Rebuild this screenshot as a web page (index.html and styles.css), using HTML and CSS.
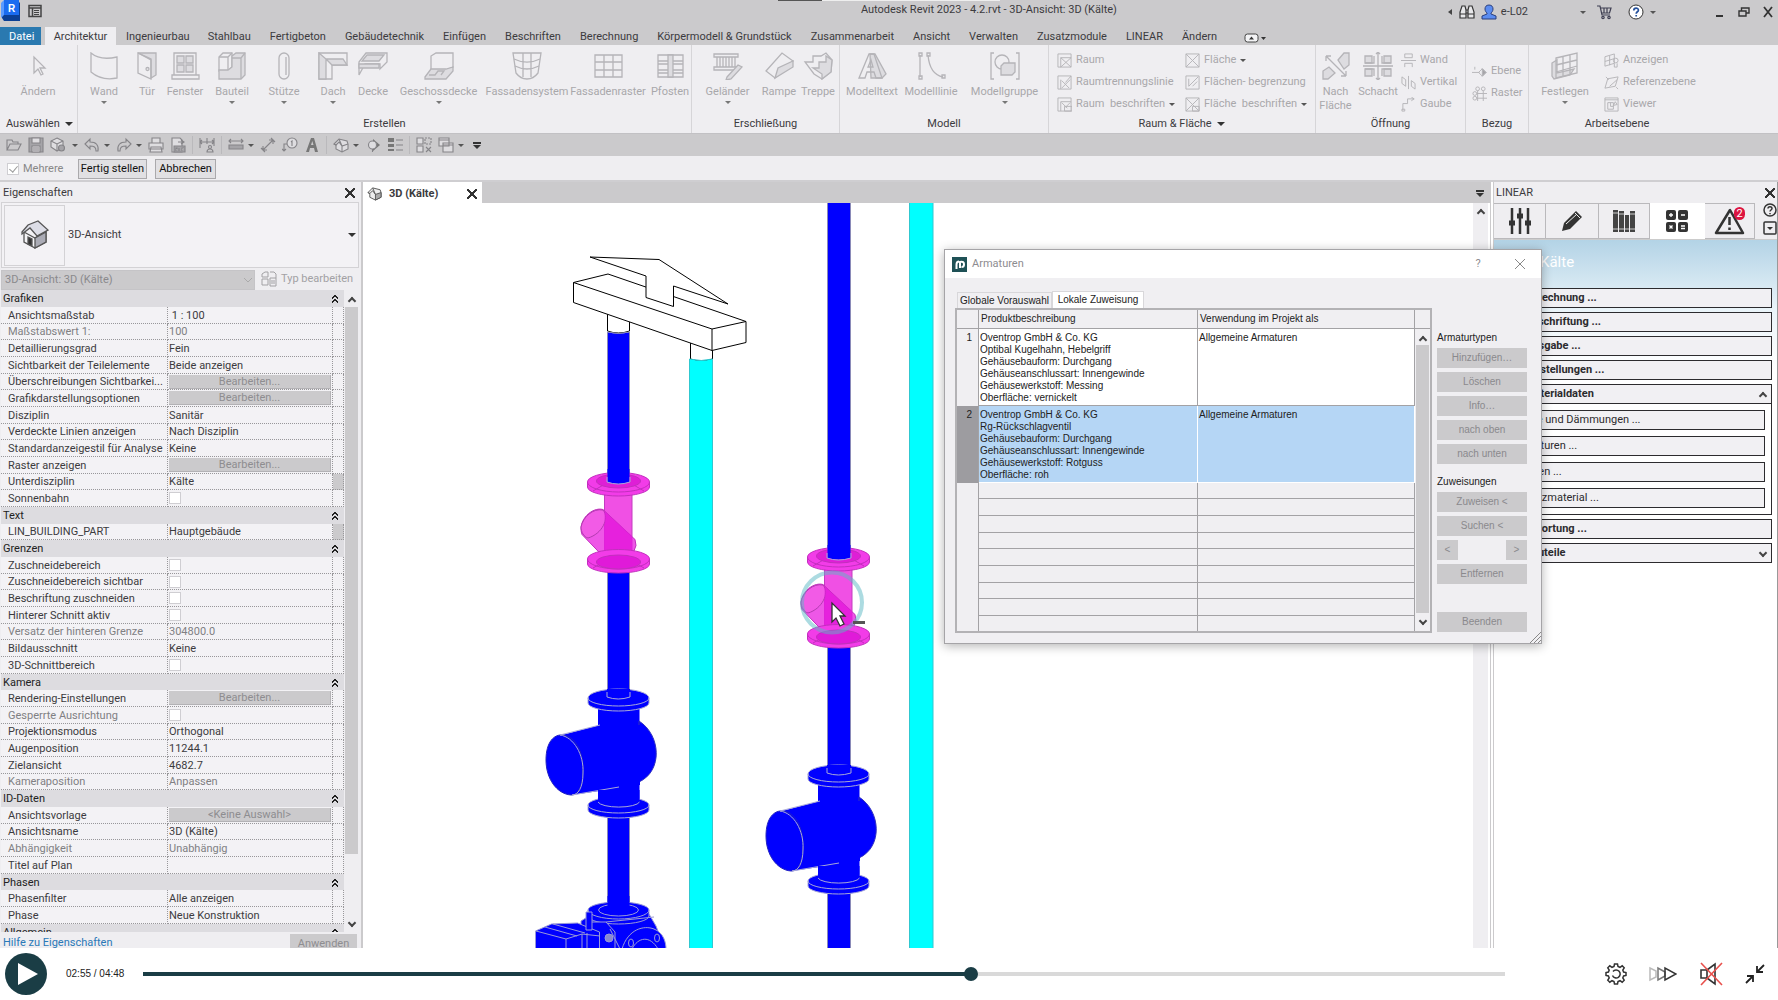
FILE: index.html
```
<!DOCTYPE html>
<html lang="de">
<head>
<meta charset="utf-8">
<title>Autodesk Revit 2023</title>
<link rel="stylesheet" href="styles.css">
</head>
<body>
<div class="app">
<header class="titlebar">
  <svg class="logo" width="20" height="22" viewBox="0 0 20 22"><path d="M2 1h15l2 2v18H3l-2-3z" fill="#0b3f94"/><path d="M3 0h15v15H3z" fill="#1b6cf0"/><path d="M3 0 0 3v15l3-3z" fill="#5a9bff"/><text x="7" y="12" class="logo-letter">R</text></svg>
  <svg class="appmenu" width="14" height="14" viewBox="0 0 14 14"><path d="M1 1.500h12v11H1zM1 4h12M4.500 4v8" fill="none" stroke="#444" stroke-width="1.500"/><path d="M6 6.500h5M6 8.500h5M6 10.500h5" stroke="#444"/></svg>
  <span class="doc-title">Autodesk Revit 2023 - 4.2.rvt - 3D-Ansicht: 3D (Kälte)</span>
  <div class="recorder"></div>
  <div class="account">
    <i class="caret left"></i>
    <svg width="16" height="16" viewBox="0 0 16 16" fill="#e8e8ea" stroke="#333" stroke-width="1.200"><path d="M3 2h3l1 4v8H1V8zM13 2h-3L9 6v8h6V8zM7 6h2v3H7zM1 10h6M9 10h6"/></svg>
    <svg width="16" height="16" viewBox="0 0 16 16" fill="#5b8cf0" stroke="#2b3f7c"><path d="M8 1c3 0 4 2 4 4s-1 3-2 4v1l5 2v3H1v-3l5-2V9C5 8 4 7 4 5s1-4 4-4z"/></svg>
    <span class="user">e-L02</span>
    <i class="caret"></i>
    <svg class="cart" width="16" height="16" viewBox="0 0 16 16" fill="none" stroke="#3f3f52" stroke-width="1.200"><path d="M1 2h3l2 9h8M4.500 4H15l-1.500 5H6M8 4v5M11 4v5"/><circle cx="7" cy="13.500" r="1.200"/><circle cx="13" cy="13.500" r="1.200"/></svg>
    <svg class="help" width="16" height="16" viewBox="0 0 16 16"><circle cx="8" cy="8" r="7" fill="#fff" stroke="#333"/><path d="M5.800 6.500c0-3 4.600-3 4.600-.3 0 1.600-2.200 1.600-2.200 3.500M8.200 11v1.600" fill="none" stroke="#24509c" stroke-width="1.700"/></svg>
    <i class="caret"></i>
  </div>
  <div class="winbtns">
    <button aria-label="Minimieren"><svg width="12" height="12" viewBox="0 0 12 12"><path d="M2 10h7" stroke="#333" stroke-width="2"/></svg></button>
    <button aria-label="Wiederherstellen"><svg width="12" height="12" viewBox="0 0 12 12" fill="none" stroke="#333" stroke-width="1.400"><path d="M1 5h7v5H1zM3.500 5V2H11v5H8"/></svg></button>
    <button aria-label="Schließen"><svg width="12" height="12" viewBox="0 0 12 12"><path d="m2 1 8 10M10 1 2 11" stroke="#333" stroke-width="1.800"/></svg></button>
  </div>
</header>

<nav class="tabs">
  <button class="file">Datei</button><button class="active">Architektur</button><button>Ingenieurbau</button><button>Stahlbau</button><button>Fertigbeton</button><button>Gebäudetechnik</button><button>Einfügen</button><button>Beschriften</button><button>Berechnung</button><button>Körpermodell &amp; Grundstück</button><button>Zusammenarbeit</button><button>Ansicht</button><button>Verwalten</button><button>Zusatzmodule</button><button>LINEAR</button><button>Ändern</button>
  <button class="collapse" aria-label="Menüband"><svg width="22" height="12" viewBox="0 0 22 12"><rect x="1" y="2" width="13" height="8" rx="2.500" fill="#f3f3f5" stroke="#444"/><path d="m5 7.500 2.500-3 2.500 3zM17 5h5l-2.500 3z" fill="#333"/></svg></button>
</nav>

<section class="ribbon">
  <div class="group g-select">
    <div class="tools">
      <button class="tool"><svg viewBox="0 0 32 28"><path d="M12 5v16l4-4 3 6 2-1-3-6h5z"/></svg>Ändern</button>
    </div>
    <h2>Auswählen <i class="caret wide"></i></h2>
  </div>
  <div class="group g-build">
    <div class="tools">
      <button class="tool"><svg viewBox="0 0 32 28"><path d="M3 1c7 6 17 6 26 4v21C19 28 10 26 3 20z"/></svg>Wand<i class="caret"></i></button>
      <button class="tool"><svg viewBox="0 0 32 28"><path class="f" d="M7 1h18v22l-5 3V8L7 1z"/><path d="M7 1v20l13 6V7z"/><circle cx="16.500" cy="17" r="1.500"/></svg>Tür</button>
      <button class="tool"><svg viewBox="0 0 32 28"><path d="M5 1h22v22H5zM3 23h27v4H3z"/><path class="f" d="M8 4h7v7H8zM17 4h7v7h-7zM8 13h7v7H8zM17 13h7v7h-7z"/></svg>Fenster</button>
      <button class="tool"><svg viewBox="0 0 32 28"><path d="M3 5l4-4h9v14l-4 4H3z"/><path class="f" d="M16 4l4-3h9v22l-4 4H3v-9h9l4-3z"/><path d="M3 5h9l4-4M12 5v13M16 6h9l4-5M25 6v21"/></svg>Bauteil<i class="caret"></i></button>
      <button class="tool"><svg viewBox="0 0 32 28"><rect x="11" y="1" width="10" height="26" rx="5"/><path d="M18 5v18"/></svg>Stütze<i class="caret"></i></button>
      <button class="tool"><svg viewBox="0 0 32 28"><path d="M2 1h28v12H15v14H2z"/><path class="f" d="M2 1l7 6v20H2zM9 7l6 6h15l-4-6z"/></svg>Dach<i class="caret"></i></button>
      <button class="tool"><svg viewBox="0 0 32 28"><path d="M2 10L9 1h21v9l-7 7v-5H8l-6 11z"/><path class="f" d="M10 3h17l-5 6H5zM2 12h20v4H2z"/></svg>Decke</button>
      <button class="tool"><svg viewBox="0 0 32 28"><path d="M8 4l5-3h17v14l-7 3H8z"/><path class="f" d="M2 25l6-8h15l7-2v4l-7 8H2z"/><path d="M6 23h6l3-4h6l-3 4"/></svg>Geschossdecke<i class="caret"></i></button>
      <button class="tool"><svg viewBox="0 0 32 28"><path d="M2 1h28l-3 20c-6 8-16 8-22 0z"/><path d="M3 7c8 4 18 4 26 0M4 14c8 4 16 4 24 0M12 1v24M20 1v24"/></svg>Fassadensystem</button>
      <button class="tool"><svg viewBox="0 0 32 28"><path d="M3 3h27v22H3zM3 10h27M3 18h27M12 3v22M21 3v22"/></svg>Fassadenraster</button>
      <button class="tool"><svg viewBox="0 0 32 28"><path d="M4 3h25v22H4zM4 9h25M4 12h25M4 18h25M4 21h25"/><path class="f" d="M14 3h5v22h-5z"/></svg>Pfosten</button>
    </div>
    <h2>Erstellen</h2>
  </div>
  <div class="group g-access">
    <div class="tools">
      <button class="tool"><svg viewBox="0 0 32 28"><path d="M2 2h24v3H2zM2 15h24v3H2zM5 5v10M8 5v10M11 5v10M14 5v10M17 5v10M20 5v10M23 5v10"/><path class="f" d="M15 25l11-12 4 2-11 12-5 1z"/></svg>Geländer<i class="caret"></i></button>
      <button class="tool"><svg viewBox="0 0 32 28"><path d="M3 19L19 1l11 8-18 17z"/><path class="f" d="M12 26l3-10L30 9v6z"/></svg>Rampe</button>
      <button class="tool"><svg viewBox="0 0 32 28"><path d="M3 10h8V4h8l5-3 6 7-1 12-9 7-8-5z"/><path class="f" d="M11 16h6v-6h7V4l6 4-1 12-9 7v-5z"/></svg>Treppe</button>
    </div>
    <h2>Erschließung</h2>
  </div>
  <div class="group g-model">
    <div class="tools">
      <button class="tool"><svg viewBox="0 0 32 28"><path class="f" d="M14 2h5l11 20-4 4H15z"/><path d="M3 26L13 2h5l8 24h-6l-2-6h-7l-2 6zM12 15h5l-2-7z"/></svg>Modelltext</button>
      <button class="tool"><svg viewBox="0 0 32 28"><path d="M5 3v22M13 3c1 12 5 20 15 22"/><path d="M4 1h3v3H4zM4 24h3v3H4zM12 1h3v3h-3zM27 23h3v3h-3z"/></svg>Modelllinie</button>
      <button class="tool"><svg viewBox="0 0 32 28"><path d="M5 1H2v26h3M27 1h3v26h-3"/><circle cx="13" cy="10" r="7"/><path class="f" d="M12 14l3-3h11v9l-3 3H12z"/></svg>Modellgruppe<i class="caret"></i></button>
    </div>
    <h2>Modell</h2>
  </div>
  <div class="group g-room">
    <div class="tools">
      <div class="stack">
        <button><svg viewBox="0 0 16 16"><path d="M1 1h14v14H1zM4 5v10M4 5h11M4 5l11 10M15 5L4 15"/></svg>Raum</button>
        <button><svg viewBox="0 0 16 16"><path d="M1 1h14v14H1zM4 15V5M5 14l9-9M5 6l8 8M9 8l6-7"/></svg>Raumtrennungslinie</button>
        <button><svg viewBox="0 0 16 16"><path d="M1 1h14v14H1zM4 5h11M4 5v10M5 6l6 6M14 6l-5 5M8 10h8v5H8z"/></svg>Raum&nbsp; beschriften <i class="caret"></i></button>
      </div>
      <div class="stack">
        <button><svg viewBox="0 0 16 16"><path d="M1 1h14v14H1zM1 1l14 14M15 1L1 15"/></svg>Fläche <i class="caret"></i></button>
        <button><svg viewBox="0 0 16 16"><path d="M1 1h14v14H1zM4 4v8M4 12L14 2M8 12l5-5"/></svg>Flächen- begrenzung</button>
        <button><svg viewBox="0 0 16 16"><path d="M1 1h14v14H1zM1 1l14 14M15 1L1 15M8 10h7v5H8z"/></svg>Fläche&nbsp; beschriften <i class="caret"></i></button>
      </div>
    </div>
    <h2>Raum &amp; Fläche <i class="caret wide"></i></h2>
  </div>
  <div class="group g-opening">
    <div class="tools">
      <button class="tool"><svg viewBox="0 0 32 28"><path d="M6 4l20 20M6 4v5M6 4h5M26 24v-5M26 24h-5"/><path class="f" d="M18 8l6-7h5v12l-5 4zM3 19l6-4 6 6-7 6H3z"/></svg>Nach<br>Fläche</button>
      <button class="tool"><svg viewBox="0 0 32 28"><path class="f" d="M3 4h7v7H3zM22 4h7v7h-7zM3 17h7v7H3zM22 17h7v7h-7z"/><path d="M12 4v7H3M20 4v7h9M12 24v-7H3M20 24v-7h9M16 0v28M1 14h30M14 2l2-2 2 2M14 26l2 2 2-2"/></svg>Schacht</button>
      <div class="stack">
        <button><svg viewBox="0 0 16 16"><path d="M4 1h8v4H4zM0 8h16M4 15v-4h8v4"/></svg>Wand</button>
        <button><svg viewBox="0 0 16 16"><path d="M1 2l4 3v7L1 9zM11 6l4 3v6l-4-3zM8 1v14"/></svg>Vertikal</button>
        <button><svg viewBox="0 0 16 16"><path d="M2 14V7h5V2h7M11 0l3 2-3 2M1 13h3v2H1z"/></svg>Gaube</button>
      </div>
    </div>
    <h2>Öffnung</h2>
  </div>
  <div class="group g-datum">
    <div class="tools">
      <div class="stack two">
        <button><svg viewBox="0 0 16 16"><path d="M0 9h8M3 3v3M11 5l4 4-4 4-4-4z"/><path class="d" d="M11 5v8l4-4z"/></svg>Ebene</button>
        <button><svg viewBox="0 0 16 16"><circle cx="6" cy="3" r="2"/><circle cx="12" cy="3" r="2"/><circle cx="3" cy="8" r="2"/><circle cx="3" cy="13" r="2"/><path d="M6 5v11M12 5v11M5 8h11M5 13h11"/></svg>Raster</button>
      </div>
    </div>
    <h2>Bezug</h2>
  </div>
  <div class="group g-plane">
    <div class="tools">
      <button class="tool"><svg viewBox="0 0 32 28"><path class="f" d="M3 11l5-3v13l17-4-4 6-16 4-2-3z"/><path d="M7 6l21-5v20L7 26zM7 13l21-5M7 20l21-6M14 4v20M21 3v20"/></svg>Festlegen<i class="caret"></i></button>
      <div class="stack">
        <button><svg viewBox="0 0 16 16"><path d="M1 4l10-3v10L1 14zM1 9l10-3M6 3v10"/><circle cx="12.500" cy="8" r="2.500"/><path d="M11 11v4h3v-4"/></svg>Anzeigen</button>
        <button><svg viewBox="0 0 16 16"><path d="M4 4l11-2-3 10-11 2zM2 2l3 3M13 13l2 2M6 12l8-7"/></svg>Referenzebene</button>
        <button><svg viewBox="0 0 16 16"><path d="M1 1h14v14H1zM1 3h14M4 6h6v7H4zM7 6v4h3M12 5l-2 4 4-1z"/></svg>Viewer</button>
      </div>
    </div>
    <h2>Arbeitsebene</h2>
  </div>
</section>

<div class="qat">
  <button aria-label="Öffnen"><svg viewBox="0 0 16 16"><path d="M1 13V3h5l1 2h5v2M1 13l3-6h11l-3 6z"/></svg></button>
  <button aria-label="Speichern"><svg viewBox="0 0 16 16"><path class="g" d="M1 1h14v14H1z"/><path class="w" d="M4 1h8v5H4zM4 9h8v6H4z"/><path d="M5 11h6M5 13h6"/></svg></button>
  <button aria-label="Synchronisieren" class="roomy"><svg viewBox="0 0 16 16"><path class="w" d="M7 1l6 3v6l-6 4-6-4V4z"/><path d="M1 4l6 3 6-3M7 7v7"/><circle class="g" cx="11.500" cy="11" r="3"/></svg><i class="caret"></i></button>
  <button aria-label="Rückgängig"><svg viewBox="0 0 16 16"><path d="M1 7l5-5v3c6 0 9 3 8 9h-2c0-4-2-5-6-5v3z"/></svg><i class="caret"></i></button>
  <button aria-label="Wiederholen"><svg viewBox="0 0 16 16"><path d="M15 7l-5-5v3C4 5 1 8 2 14h2c0-4 2-5 6-5v3z"/></svg><i class="caret"></i></button>
  <button aria-label="Drucken"><svg viewBox="0 0 16 16"><path class="w" d="M4 6V1h8v5M1 6h14v6H1zM3 10h10l1 5H2z"/></svg></button>
  <button aria-label="PDF" class="sep"><svg viewBox="0 0 16 16"><path class="w" d="M2 1h8l2 2v12H2z"/><path d="M8 5h5M11 3l3 2-3 2"/><path class="g" d="M4 9h11v6H4z"/><path class="w" d="M6 14v-3h1v1M9 14v-3M12 14v-3h2"/></svg></button>
  <button aria-label="Bemaßung" class="sep"><svg viewBox="0 0 16 16"><path d="M1 1v10M15 1v8M1 5h14M3 3L1 5l2 2M13 3l2 2-2 2M8 1v6"/><circle cx="11" cy="10" r="1.500"/><path d="M8 15c0-4 6-4 6 0z"/></svg></button>
  <button aria-label="Messen"><svg viewBox="0 0 16 16"><path d="M1 4h14M3 2L1 4l2 2M13 2l2 2-2 2"/><path class="g" d="M1 8h14v4H1z"/></svg><i class="caret"></i></button>
  <button aria-label="Ausgerichtete Bemaßung"><svg viewBox="0 0 16 16"><path d="M3 13L13 3M9 3h4v4M3 9v4h4M1 11l4 4M11 1l4 4"/></svg></button>
  <button aria-label="Element beschriften"><svg viewBox="0 0 16 16"><circle class="w" cx="10" cy="6" r="5"/><path d="M9 5l1-1v5M5 7H2v6M0 12l2 2 2-2"/></svg></button>
  <button aria-label="Text" class="sep"><svg viewBox="0 0 16 16"><path class="s" d="M2 15L7 1h3l4 14h-3l-1-4H6l-1 4zM7 8h2.500L8.300 4z"/></svg></button>
  <button aria-label="3D"><svg viewBox="0 0 16 16"><path class="w" d="M1 7l5-5 8 2 1 3v5l-6 3-6-3V8z"/><path d="M1 7l2 1 3-3 3 4 6-2M9 9v6M6 2l3 7"/></svg><i class="caret"></i></button>
  <button aria-label="Schnitt"><svg viewBox="0 0 16 16"><path class="s" d="M8 2l7 6-7 6z"/><circle class="w" cx="7.500" cy="8" r="4"/><path d="M7.500 12v3"/></svg></button>
  <button aria-label="Dünne Linien" class="sep"><svg viewBox="0 0 16 16"><path class="s" d="M1 1h6v4H1zM1 7h6v3H1zM1 12h6v2H1z"/><path d="M9 3h7M9 8h7M9 13h7"/></svg></button>
  <button aria-label="Fenster schließen"><svg viewBox="0 0 16 16"><path class="w" d="M1 1h6v6H1zM1 9h6v6H1z"/><path d="M9 1h6v6H9z" stroke-dasharray="2 1"/><path d="M10 10l5 5M15 10l-5 5"/></svg></button>
  <button aria-label="Fenster wechseln"><svg viewBox="0 0 16 16"><path class="w" d="M1 1h10v8H1zM5 6h10v9H5z"/><path d="M1 3h10M5 8h10"/></svg><i class="caret"></i></button>
  <button aria-label="Anpassen"><i class="caret wide lined"></i></button>
</div>

<div class="options">
  <label><input type="checkbox" class="box" checked disabled> Mehrere</label>
  <button>Fertig stellen</button>
  <button>Abbrechen</button>
</div>

<main class="work">
  <aside class="props">
    <div class="panel-head"><span>Eigenschaften</span><button class="x" aria-label="Schließen"></button></div>
    <button class="typebox">
      <span class="thumb"><svg width="30" height="30" viewBox="0 0 30 30" stroke="#555" stroke-width="1.300"><path d="M4 12v10l11 6 11-6V12L15 18z" fill="#f4f4f6"/><path d="M15 18v10l11-6V12z" fill="#aaabb5"/><path d="M2 12L8 5l10-4 10 9-11 6-7-8-8 6z" fill="#dcdde6"/><path d="M8 17l4 2v7l-4-2z" fill="#333"/></svg></span>
      <span>3D-Ansicht</span><i class="caret wide"></i>
    </button>
    <div class="typerow">
      <select aria-label="Ansicht" disabled><option>3D-Ansicht: 3D (Kälte)</option></select>
      <button disabled><svg width="16" height="16" viewBox="0 0 16 16" fill="none" stroke="#a2a1a4"><path d="M1 3l3-2h3v5H1zM9 1h4l2 2v4M1 8v6h6V8zM9 7h6v8H9zM10 10h4M10 12h4"/></svg>Typ bearbeiten</button>
    </div>
    <div class="listwrap">
      <div class="list">
      <table>
        <colgroup><col class="c1"><col class="c2"><col class="c3"></colgroup>
        <tbody>
        <tr class="cat"><th colspan="3">Grafiken<b></b></th></tr>
        <tr><td>Ansichtsmaßstab</td><td>&nbsp;1 : 100</td><td></td></tr>
        <tr class="off"><td>Maßstabswert 1:</td><td>100</td><td></td></tr>
        <tr><td>Detaillierungsgrad</td><td>Fein</td><td></td></tr>
        <tr><td>Sichtbarkeit der Teilelemente</td><td>Beide anzeigen</td><td></td></tr>
        <tr><td>Überschreibungen Sichtbarkei...</td><td><button disabled>Bearbeiten...</button></td><td></td></tr>
        <tr><td>Grafikdarstellungsoptionen</td><td><button disabled>Bearbeiten...</button></td><td></td></tr>
        <tr><td>Disziplin</td><td>Sanitär</td><td></td></tr>
        <tr><td>Verdeckte Linien anzeigen</td><td>Nach Disziplin</td><td></td></tr>
        <tr><td>Standardanzeigestil für Analyse</td><td>Keine</td><td></td></tr>
        <tr><td>Raster anzeigen</td><td><button disabled>Bearbeiten...</button></td><td></td></tr>
        <tr><td>Unterdisziplin</td><td>Kälte</td><td class="more"></td></tr>
        <tr><td><label for="p1">Sonnenbahn</label></td><td><input id="p1" type="checkbox" class="box"></td><td></td></tr>
        <tr class="cat"><th colspan="3">Text<b></b></th></tr>
        <tr><td>LIN_BUILDING_PART</td><td>Hauptgebäude</td><td class="more"></td></tr>
        <tr class="cat"><th colspan="3">Grenzen<b></b></th></tr>
        <tr><td><label for="p2">Zuschneidebereich</label></td><td><input id="p2" type="checkbox" class="box"></td><td></td></tr>
        <tr><td><label for="p3">Zuschneidebereich sichtbar</label></td><td><input id="p3" type="checkbox" class="box"></td><td></td></tr>
        <tr><td><label for="p4">Beschriftung zuschneiden</label></td><td><input id="p4" type="checkbox" class="box"></td><td></td></tr>
        <tr><td><label for="p5">Hinterer Schnitt aktiv</label></td><td><input id="p5" type="checkbox" class="box"></td><td></td></tr>
        <tr class="off"><td>Versatz der hinteren Grenze</td><td>304800.0</td><td></td></tr>
        <tr><td>Bildausschnitt</td><td>Keine</td><td></td></tr>
        <tr><td><label for="p6">3D-Schnittbereich</label></td><td><input id="p6" type="checkbox" class="box"></td><td></td></tr>
        <tr class="cat"><th colspan="3">Kamera<b></b></th></tr>
        <tr><td>Rendering-Einstellungen</td><td><button disabled>Bearbeiten...</button></td><td></td></tr>
        <tr class="off"><td><label for="p7">Gesperrte Ausrichtung</label></td><td><input id="p7" type="checkbox" class="box" disabled></td><td></td></tr>
        <tr><td>Projektionsmodus</td><td>Orthogonal</td><td></td></tr>
        <tr><td>Augenposition</td><td>11244.1</td><td></td></tr>
        <tr><td>Zielansicht</td><td>4682.7</td><td></td></tr>
        <tr class="off"><td>Kameraposition</td><td>Anpassen</td><td></td></tr>
        <tr class="cat"><th colspan="3">ID-Daten<b></b></th></tr>
        <tr><td>Ansichtsvorlage</td><td><button disabled>&lt;Keine Auswahl&gt;</button></td><td></td></tr>
        <tr><td>Ansichtsname</td><td>3D (Kälte)</td><td></td></tr>
        <tr class="off"><td>Abhängigkeit</td><td>Unabhängig</td><td></td></tr>
        <tr><td>Titel auf Plan</td><td></td><td></td></tr>
        <tr class="cat"><th colspan="3">Phasen<b></b></th></tr>
        <tr><td>Phasenfilter</td><td>Alle anzeigen</td><td></td></tr>
        <tr><td>Phase</td><td>Neue Konstruktion</td><td></td></tr>
        <tr class="cat"><th colspan="3">Allgemein<b></b></th></tr>
        </tbody>
      </table>
      </div>
      <div class="scroll"><i class="chev up"></i><div class="thumbbar"></div><i class="chev"></i></div>
    </div>
    <div class="props-foot"><a href="#hilfe">Hilfe zu Eigenschaften</a><button disabled>Anwenden</button></div>
  </aside>

  <section class="view">
    <div class="viewtabs">
      <div class="viewtab"><svg width="15" height="15" viewBox="0 0 16 16" stroke="#555"><path d="M1 7l5-5 8 2 1 3v5l-6 3-6-3V8z" fill="#eee"/><path d="M9 9l6-2v5l-6 3z" fill="#aaa"/><path d="M1 7l2 1 3-3 3 4M6 2l3 7" fill="none"/></svg><span>3D (Kälte)</span><button class="x" aria-label="Schließen"></button></div>
      <i class="caret wide lined"></i>
    </div>
    <div class="canvas">
      <svg class="scene" viewBox="363 202 1110 746" preserveAspectRatio="xMinYMin slice">
        <defs>
          <g id="check">
            <path d="M604.500 488h27.500v70h-27.500z" fill="#f050e4" stroke="#c43cc0"/>
            <path d="M603 509.500l32 30 1 6-3 8-6 8h-19l-26-27c-5-14 10-28 21-25z" fill="#e81fdf" fill-opacity=".75" stroke="#c22fbe"/>
            <path d="M581 527c2-10 12-19 22-17 7 8-1 24-15 28-4-1-7-6-7-11z" fill="#f25be6" stroke="#b23bb0"/>
            <path d="M604.500 512v46h27.500v-22l-27.500-25z" fill="#e31bdc" fill-opacity=".65"/>
            <g fill="#f23ce8" stroke="#c22fbe"><path d="M587.500 482a31 9.500 0 0 1 62 0v5a31 9 0 0 1-62 0z"/><path d="M587.500 482a31 10 0 0 0 62 0M593 491l12-7M644 491l-12-7" fill="none"/><ellipse cx="618.500" cy="481" rx="22" ry="7" fill="#de1fd6"/>
            <path d="M587.500 559a31 9.500 0 0 1 62 0v5a31 9 0 0 1-62 0z"/><path d="M587.500 559a31 10 0 0 0 62 0M593 568l12-7M644 568l-12-7" fill="none"/><ellipse cx="618.500" cy="562" rx="22" ry="7" fill="#e01ad9"/></g>
          </g>
          <g id="globe" fill="#00f" stroke="#a8a8d8" stroke-width="1">
            <path d="M598 708h41.500v94H598z" stroke="none"/>
            <path d="M639 721c22 14 24 50 0 61z" stroke="#3030c0"/>
            <path d="M562 735l38-10h40v60l-68 10z" stroke="none"/>
            <path d="M546 760c0-18 8-26 17-25 14 2 21 20 20 38-1 16-6 22-12 22-14-1-25-16-25-35z" stroke="#2020c0"/>
            <path d="M560 735c14 2 24 20 23 38 0 15-5 22-11 22l47-8M560 735l40-10" fill="none"/>
            <path d="M588 805a30.500 8 0 0 1 61 0v5a30.500 8 0 0 1-61 0z"/><path d="M588 805a30.500 8 0 0 0 61 0" fill="none"/><path d="M598 790h41.500v13a21 5 0 0 1-41.500 0z" stroke="none"/><path d="M598 802a21 6 0 0 0 41.500 0" fill="none"/>
            <path d="M588 698a30.500 9 0 0 1 61 0v5a30.500 8 0 0 1-61 0z"/><path d="M588 698a30.500 8 0 0 0 61 0" fill="none"/>
          </g>
        </defs>
        <g fill="#fff" stroke="#000">
          <path d="M607.500 310v20q11 4 22 0v-20zM690.500 338v20q11 4 22 0v-20z"/>
          <path d="M573.500 281.500l34.500-8.500 138 47.500v21l-34 8-138.500-48z"/>
          <path d="M573.500 281.500L712 328v21.500M712 328l34-7.500" fill="none"/>
          <path d="M590 256l69 2.500L728 303l-54.500-18v20.500l-27.500-9V275z"/>
        </g>
        <g fill="#00f" stroke="#8a8ab8">
          <path d="M607.500 331q11 3 22 0v620h-22z"/>
          <path d="M827.500 200h23v750h-23z"/>
        </g>
        <path d="M689.500 358q12 3 23 0v592h-23zM909.500 200h23.500v750h-23.500z" fill="#0ff" stroke="#30c8d0"/>
        <use href="#check" y="-1"/><path d="M607.500 468v13q11 4 22 0v-13z" fill="#00f"/><path d="M607 476v5q11 4 23 0v-5" fill="none" stroke="#a8a8d8"/>
        <use href="#check" x="220" y="74"/><path d="M827.500 544v13q11 3 23 0v-13z" fill="#00f"/><path d="M827 552v5q11 4 24 0v-5" fill="none" stroke="#a8a8d8"/>
        <use href="#globe" y="-1"/><path d="M607 688v8q11 4 23 0v-8z" fill="#00f"/><path d="M607 691v5q11 4 23 0v-5" fill="none" stroke="#a8a8d8"/>
        <use href="#globe" x="220" y="75"/><path d="M827 764v8q11 4 24 0v-8z" fill="#00f"/><path d="M827 767v5q11 4 24 0v-5" fill="none" stroke="#a8a8d8"/>
        <g fill="#00f" stroke="#9a9ad8">
          <path d="M581 948v-28l8-5 60-2 7 12 9 23z"/>
          <path d="M588 909a30.500 8 0 0 1 61 0v6a30.500 8 0 0 1-61 0z"/><ellipse cx="618.500" cy="909" rx="20" ry="6"/><path d="M588 909a30.500 9 0 0 0 61 0" fill="none"/>
          <path d="M607.500 895v12q11 4 22 0v-12" stroke="none"/>
          <path d="M590 921h16l9 10v17M606 921l48-5M610 928l10 20M622 948c6-20 22-24 32-20s12 14 12 20z"/><path d="M632 948c6-12 18-14 26 0" fill="none"/>
          <circle cx="609" cy="937" r="4" fill="#8888d0"/><ellipse cx="631" cy="942" rx="2.500" ry="4"/><ellipse cx="657" cy="937" rx="2.500" ry="4"/>
          <path d="M535.500 948v-18l16-7 26-1 22 9v17z"/><path d="M536 930l30 8v10M566 938l16-5 18 2M545 926l32 9M553 923l32 9M582 933v15M587 932v16" fill="none"/>
          <path d="M586 911h6v18h-6z"/>
        </g>
        <circle cx="832" cy="601.500" r="30" fill="none" stroke="#5ab8c4" stroke-opacity=".5" stroke-width="4"/>
        <path d="M853 620h12v3h-12z" fill="#555"/>
        <path d="M832 602v19l4-4 4 8 4-2-4-8h5z" fill="#fff" stroke="#333" stroke-width="1.300"/>
      </svg>
      <div class="scroll"><i class="chev up"></i></div>
    </div>
  </section>

  <aside class="linear">
    <div class="panel-head"><span>LINEAR</span><button class="x" aria-label="Schließen"></button></div>
    <div class="ltabs">
      <button aria-label="Einstellungen"><svg width="24" height="28" viewBox="0 0 24 28" stroke="#333" stroke-width="3"><path d="M4 1v26M12 1v26M20 1v26" stroke-width="2.500"/><path d="M1 16h6M9 9h6M17 16h6" stroke-width="5"/></svg></button>
      <button aria-label="Zeichnen"><svg width="24" height="24" viewBox="0 0 24 24"><path d="M2 22l2-8L16 2l6 6L10 20z" fill="#333"/><path d="M6 15L17 5M15 4l5 5" stroke="#eee" fill="none"/></svg></button>
      <button aria-label="Bibliothek"><svg width="24" height="24" viewBox="0 0 24 24" fill="#444"><path d="M1 1h5v22H1zM7 2h5v21H7zM13 6h4v17h-4zM18 2h5v21h-5z"/><path d="M1 4h5M1 20h5M7 5h5M7 20h5M13 20h4M18 5h5M18 20h5" stroke="#ccc"/></svg></button>
      <button class="active" aria-label="Berechnung"><svg width="24" height="24" viewBox="0 0 24 24" fill="#333"><rect x="1" y="1" width="10" height="10" rx="2"/><rect x="13" y="1" width="10" height="10" rx="2"/><rect x="1" y="13" width="10" height="10" rx="2"/><rect x="13" y="13" width="10" height="10" rx="2"/><path d="M4 6h4M6 4v4M16 6h4M4.500 16.500l3 3M7.500 16.500l-3 3M16 17h4M16 19.500h4" stroke="#fff" stroke-width="1.300"/></svg></button>
      <button aria-label="Warnungen"><svg width="34" height="30" viewBox="0 0 34 30"><path d="M17 4L3 27h27z" fill="none" stroke="#333" stroke-width="2.500" stroke-linejoin="round"/><path d="M16.500 11v8M16.500 21.500v2.500" stroke="#333" stroke-width="2.500"/></svg><span class="badge">2</span></button>
      <div class="lside"><button aria-label="Hilfe"><svg width="14" height="14" viewBox="0 0 14 14" fill="none" stroke="#333" stroke-width="1.500"><circle cx="7" cy="7" r="6"/><path d="M5 5.500c0-2.500 4-2.500 4 0C9 7 7 7 7 8.500M7 10v1.200"/></svg></button><button aria-label="Menü"><svg width="14" height="14" viewBox="0 0 14 14"><rect x="1" y="1" width="12" height="12" rx="1" fill="none" stroke="#333" stroke-width="1.500"/><path d="M4 6h6l-3 3z" fill="#333"/></svg></button></div>
    </div>
    <div class="lbody">
      <div class="lhead"><svg width="30" height="30" viewBox="0 0 30 30" stroke="#fff" stroke-width="2"><path d="M15 2v26M2 15h26M6 6l18 18M24 6L6 24M10 3l10 24M20 3L10 27"/></svg><span>Kälte</span></div>
      <button>Berechnung ...</button>
      <button>Beschriftung ...</button>
      <button>Ausgabe ...</button>
      <button>Einstellungen ...</button>
      <div class="fold">
        <button class="split"><span>Materialdaten</span><i class="chev up"></i></button>
        <button class="sub">Rohre und Dämmungen ...</button>
        <button class="sub">Armaturen ...</button>
        <button class="sub">Medien ...</button>
        <button class="sub">Zusatzmaterial ...</button>
      </div>
      <button>Verortung ...</button>
      <button class="split"><span>Bauteile</span><i class="chev"></i></button>
    </div>
  </aside>

  <div class="dialog" role="dialog" aria-label="Armaturen">
    <div class="dhead"><svg width="15" height="15" viewBox="0 0 15 15"><path d="M0 0h15v15H0z" fill="#1f5156"/><path d="M4.500 12V7.500c0-2 1-3 2.500-3M8 11V5c3-1 4 .5 4 2.500S11 10 9.500 10" fill="none" stroke="#fff" stroke-width="2"/></svg><span>Armaturen</span><button aria-label="Hilfe">?</button><button aria-label="Schließen"><svg width="12" height="12" viewBox="0 0 12 12"><path d="M1 1l10 10M11 1L1 11" stroke="#888"/></svg></button></div>
    <div class="dbody">
      <div class="dleft">
        <div class="dtabs"><button>Globale Vorauswahl</button><button class="active">Lokale Zuweisung</button></div>
        <div class="dgrid">
          <table>
            <colgroup><col class="n"><col class="p"><col class="v"></colgroup>
            <thead><tr><th></th><th>Produktbeschreibung</th><th>Verwendung im Projekt als</th></tr></thead>
            <tbody>
              <tr class="item"><th>1</th><td>Oventrop GmbH &amp; Co. KG<br>Optibal Kugelhahn, Hebelgriff<br>Gehäusebauform: Durchgang<br>Gehäuseanschlussart: Innengewinde<br>Gehäusewerkstoff: Messing<br>Oberfläche: vernickelt</td><td>Allgemeine Armaturen</td></tr>
              <tr class="item sel"><th>2</th><td>Oventrop GmbH &amp; Co. KG<br>Rg-Rückschlagventil<br>Gehäusebauform: Durchgang<br>Gehäuseanschlussart: Innengewinde<br>Gehäusewerkstoff: Rotguss<br>Oberfläche: roh</td><td>Allgemeine Armaturen</td></tr>
              <tr><th></th><td></td><td></td></tr><tr><th></th><td></td><td></td></tr><tr><th></th><td></td><td></td></tr><tr><th></th><td></td><td></td></tr><tr><th></th><td></td><td></td></tr><tr><th></th><td></td><td></td></tr><tr><th></th><td></td><td></td></tr><tr><th></th><td></td><td></td></tr><tr><th></th><td></td><td></td></tr>
            </tbody>
          </table>
          <div class="scroll"><i class="chev up"></i><div class="thumbbar"></div><i class="chev"></i></div>
        </div>
      </div>
      <div class="dside">
        <span>Armaturtypen</span>
        <button disabled>Hinzufügen…</button><button disabled>Löschen</button><button disabled>Info…</button><button disabled>nach oben</button><button disabled>nach unten</button>
        <span class="second">Zuweisungen</span>
        <button disabled>Zuweisen &lt;</button><button disabled>Suchen &lt;</button>
        <div class="pair"><button disabled>&lt;</button><button disabled>&gt;</button></div>
        <button disabled>Entfernen</button>
        <button disabled class="end">Beenden</button>
      </div>
    </div>
    <svg class="grip" width="11" height="11" viewBox="0 0 11 11"><path d="M0 11L11 0M4 11l7-7M8 11l3-3" stroke="#888"/></svg>
  </div>
</main>

<footer class="player">
  <button class="play" aria-label="Wiedergabe"><svg width="42" height="42" viewBox="0 0 42 42"><circle cx="21" cy="21" r="21" fill="#1a3d45"/><path d="M13 10l20 11-20 11z" fill="#fff"/></svg></button>
  <span class="time">02:55 / 04:48</span>
  <input type="range" aria-label="Position" min="0" max="2880" value="1755">
  <div class="controls">
  <button aria-label="Einstellungen"><svg width="22" height="22" viewBox="0 0 22 22" fill="none" stroke="#333" stroke-width="1.500"><path d="M9.500 1h3l.5 2.500 2 .8 2.200-1.500 2 2L17.800 7l.8 2 2.400.5v3l-2.400.5-.8 2 1.400 2.200-2 2-2.200-1.500-2 .8-.5 2.500h-3L9 18.500l-2-.8-2.200 1.500-2-2L4.200 15l-.8-2L1 12.500v-3L3.400 9l.8-2-1.400-2.200 2-2L7 4.300l2-.8z"/><path d="M8 8.500a4 4 0 1 1-.5 4"/></svg></button>
  <button aria-label="Geschwindigkeit"><svg width="28" height="16" viewBox="0 0 28 16" fill="none" stroke-width="1.500"><path d="M1 2v12l6-3V5z" stroke="#bbb"/><path d="M9 2v12l7-4V6z" stroke="#777"/><path d="M16 2v12l11-6z" stroke="#333"/></svg></button>
  <button aria-label="Ton aus"><svg width="24" height="24" viewBox="0 0 24 24" fill="none"><path d="M8 8H2v8h6zM8 8l8-6v20l-8-6" stroke="#333" stroke-width="1.600"/><path d="M2 1l21 22M23 1L2 23" stroke="#e8504c" stroke-width="1.600"/></svg></button>
  <button aria-label="Vollbild beenden"><svg width="20" height="20" viewBox="0 0 20 20" fill="none" stroke="#222" stroke-width="1.800"><path d="M19 1l-7 7M12 2v6h6M1 19l7-7M2 12h6v6"/></svg></button>
  </div>
</footer>
</div>
</body>
</html>
```
FILE: styles.css
```
* { box-sizing: border-box; }
body { margin: 0; background: #fff; color: #3c3b3e; font: 11px/16px Roboto, "Open Sans", sans-serif; }
button, select, input { font: inherit; color: inherit; margin: 0; }
button { border: 0; padding: 0; background: none; }
svg { display: block; flex: none; }
.app { display: flex; flex-direction: column; height: 100vh; overflow: hidden; }

/* small arrows */
.caret { display: inline-block; flex: none; border: 3px solid transparent; border-top-color: #555; border-bottom: 0; vertical-align: middle; }
.caret.left { border: 3px solid transparent; border-right: 4px solid #444; border-left: 0; }
.caret.wide { border-width: 4px 4px 0; border-top-color: #333; }
.caret.lined { position: relative; }
.caret.lined::before { content: ""; position: absolute; left: -4px; top: -7px; width: 8px; height: 2px; background: #333; }
.chev { width: 6px; height: 6px; border: solid #444; border-width: 0 2px 2px 0; transform: rotate(45deg); flex: none; }
.chev.up { transform: rotate(225deg); }
.x { width: 10px; height: 10px; background: linear-gradient(45deg, transparent 44%, #333 44%, #333 56%, transparent 56%), linear-gradient(-45deg, transparent 44%, #333 44%, #333 56%, transparent 56%); }
.box { appearance: none; position: relative; width: 12px; height: 12px; background: #fff; border: 1px solid #cfced2; display: block; }
.box:checked::after { content: ""; position: absolute; left: 3px; top: 0; width: 4px; height: 7px; border: solid #999; border-width: 0 1px 1px 0; transform: rotate(40deg); }

/* title bar */
.titlebar { position: relative; flex: none; height: 27px; background: #cbcacc; display: flex; align-items: center; padding: 0 4px 5px 1px; }
.logo-letter { font: bold 10px "Liberation Sans", sans-serif; fill: #fff; }
.logo { align-self: flex-start; }
.appmenu { margin-left: 7px; }
.doc-title { flex: 1; padding: 0 0 3px 488px; text-align: center; }
.recorder { position: absolute; left: 778px; top: 0; width: 222px; height: 1px; background: linear-gradient(90deg, #555 44px, #eee 44px); }
.account { display: flex; align-items: center; padding-top: 2px; }
.account svg { margin-left: 6px; }
.account .left + svg { margin-left: 7px; }
.user { margin: 0 52px 0 4px; }
.account .cart { margin-left: 10px; }
.account .help { margin-left: 16px; margin-right: 6px; }
.winbtns { display: flex; gap: 12px; padding-top: 2px; margin-left: 58px; }

/* ribbon tabs */
.tabs { flex: none; height: 18px; background: #cbcacc; display: flex; }
.tabs button { padding: 1px 9px 0; height: 18px; line-height: 18px; white-space: nowrap; }
.tabs button:nth-child(n+5) { margin-left: 1px; }
.tabs .file { background: #2a79b0; color: #fff; width: 41px; margin-right: 4px; }
.tabs .active { background: #efeef1; width: 71px; padding: 1px 0 0; margin-right: 1px; }
.tabs .collapse { padding: 3px 0 0 17px; }

/* ribbon */
.ribbon { flex: none; height: 89px; background: #efeef1; display: grid; grid-template-columns: 78px 614px 148px 209px 267px 150px 63px 1fr; border-bottom: 1px solid #c2c1c4; }
.group { display: flex; flex-direction: column; border-right: 1px solid #d6d5d8; }
.group:last-child { border-right: 0; }
.group h2 { margin: 0; height: 17px; font-size: 11px; font-weight: 400; line-height: 16px; text-align: center; }
.g-select h2 { text-align: left; padding-left: 6px; }
.group h2 .caret { margin-left: 3px; }
.g-plane h2 { width: 176px; }
.tools { flex: 1; display: grid; align-content: start; padding-top: 7px; color: #a9a8ab; }
.tool { display: flex; flex-direction: column; align-items: center; line-height: 14px; min-width: 0; white-space: nowrap; }
.tool svg { width: 32px; height: 28px; margin-bottom: 5px; }
.tool .caret { margin-top: 2px; border-top-color: #777; }
.ribbon svg { fill: none; stroke: #b5b4b8; stroke-width: 1.3; }
.ribbon svg .f { fill: #dddce0; }
.ribbon svg .d { fill: #a5a4a8; }
.g-select .tools { grid-template-columns: 76px; }
.g-build .tools { grid-template-columns: 48px 38px 38px 56px 48px 50px 30px 101px 76px 86px 38px; padding-left: 2px; }
.g-access .tools { grid-template-columns: 53px 50px 28px; padding-left: 9px; }
.g-model .tools { grid-template-columns: 56px 62px 85px; padding-left: 4px; }
.g-room .tools { grid-template-columns: 128px 130px; padding-left: 8px; }
.g-opening .tools { grid-template-columns: 39px 42px 62px; gap: 0 2px; }
.g-datum .tools { padding-left: 6px; }
.g-plane .tools { grid-template-columns: 72px 120px; gap: 3px; }
.stack { display: flex; flex-direction: column; gap: 6px; }
.stack.two { padding-top: 11px; }
.stack button { display: flex; align-items: center; gap: 4px; height: 16px; white-space: nowrap; }
.stack svg { width: 15px; height: 15px; stroke-width: 1; }

/* quick access */
.qat { flex: none; height: 22px; background: #cbcacc; display: flex; align-items: center; padding-left: 6px; gap: 6px; }
.qat button { display: flex; align-items: center; gap: 4px; height: 18px; }
.qat .roomy { gap: 6px; }
.qat .sep { padding-right: 6px; border-right: 1px solid #bab9bc; }
.qat svg { width: 16px; height: 16px; fill: none; stroke: #858488; stroke-width: 1.1; }
.qat .w { fill: #dedde0; }
.qat .g { fill: #a5a4a8; }
.qat .s { fill: #777; stroke: none; }
.qat .lined { margin: 4px 0 0 3px; }

.options { flex: none; height: 26px; background: #efeef1; border-bottom: 2px solid #cfced1; display: flex; align-items: center; gap: 8px; padding: 2px 0 0 7px; }
.options label { display: flex; align-items: center; gap: 4px; width: 63px; color: #888; }
.options button { height: 20px; padding: 0 1px; min-width: 61px; border: 1px solid #aaa9ac; background: #e1e0e3; color: #111; }
.options button:nth-of-type(1) { min-width: 69px; }

/* work area */
.work { position: relative; flex: 1; min-height: 0; display: flex; }
.panel-head { height: 20px; flex: none; display: flex; justify-content: space-between; align-items: center; padding: 2px 6px 0 3px; }
.scroll { display: flex; flex-direction: column; align-items: center; }

.props { width: 363px; flex: none; background: #efeef1; border-right: 2px solid #cbcacc; display: flex; flex-direction: column; overflow: hidden; }
.typebox { height: 66px; flex: none; margin: 0 2px 0 1px; border: 1px solid #d3d2d5; display: flex; align-items: center; padding: 0 2px; text-align: left; background: #f3f2f5; }
.typebox span:nth-child(2) { flex: 1; padding-left: 3px; }
.thumb { width: 61px; height: 61px; border: 1px solid #d3d2d5; display: grid; place-items: center; }
.typerow { display: flex; height: 22px; flex: none; padding: 2px 0 0 1px; }
.typerow select { width: 254px; height: 20px; border: 1px solid #c5c4c7; padding: 0 3px; border-radius: 0; appearance: none; color: #8a898c; opacity: 1; background: #cbcacc; background-image: linear-gradient(45deg, transparent 45%, #aaa 45%, #aaa 60%, transparent 60%), linear-gradient(-45deg, transparent 45%, #aaa 45%, #aaa 60%, transparent 60%); background-repeat: no-repeat; background-size: 4px 4px; background-position: 242px 7px, 246px 7px; }
.typerow button { display: flex; align-items: center; gap: 4px; margin-left: 6px; color: #a2a1a4; height: 18px; }
.listwrap { flex: 1; min-height: 0; display: flex; gap: 1px; }
.list { flex: 1; overflow: hidden; }
.list table { width: 343px; table-layout: fixed; border-collapse: separate; border-spacing: 0; margin-left: 1px; }
.c1 { width: 167px; }
.c2 { width: 165px; }
.c3 { width: 11px; }
.list tr { height: 17px; }
.list tr:nth-child(3n) { height: 16px; }
.list td, .list th { padding: 0; line-height: 15px; font-weight: 400; text-align: left; white-space: nowrap; }
.list td { border-bottom: 1px dotted #98979a; border-right: 1px dotted #98979a; background: #f3f2f5; overflow: hidden; }
.list td:first-child { padding-left: 7px; }
.list td:nth-child(2) { padding-left: 1px; }
.list td button { display: block; width: 162px; height: 14px; line-height: 13px; background: #cbcacc; color: #8e8d90; border: solid #b3b2b5; border-width: 0 1px 1px 0; }
.list .off td { color: #808083; }
.list .cat th { background: #dddce0; padding-left: 2px; color: #222; }
.cat b { float: right; margin: 4px 6px 0 0; width: 6px; height: 8px; background: linear-gradient(45deg, transparent 40%, #222 40%, #222 60%, transparent 60%) right top / 3px 4px repeat-y, linear-gradient(-45deg, transparent 40%, #222 40%, #222 60%, transparent 60%) left top / 3px 4px repeat-y; }
.list .more { background: #cbcacc; }
.listwrap .scroll { width: 16px; padding: 8px 3px 6px 0; flex: none; }
.listwrap .scroll .thumbbar { width: 13px; height: 547px; margin: 3px 0 auto; background: #cbcacc; }
.props-foot { height: 16px; flex: none; display: flex; justify-content: space-between; padding: 2px 4px 0 3px; overflow: hidden; }
.props-foot a { color: #2a79b8; text-decoration: none; line-height: 18px; }
.props-foot button { width: 67px; height: 20px; background: #cbcacc; color: #8e8d90; flex: none; }

.view { flex: 1; min-width: 0; display: flex; flex-direction: column; }
.viewtabs { height: 21px; flex: none; background: #cbcacc; display: flex; align-items: center; justify-content: space-between; padding-right: 6px; }
.viewtabs .lined { margin-top: 4px; }
.viewtab { width: 119px; height: 21px; background: #fff; display: flex; align-items: center; gap: 7px; padding: 2px 5px 0 4px; font-weight: 700; }
.viewtab span { flex: 1; }
.canvas { flex: 1; min-height: 0; display: flex; background: #fff; }
.scene { flex: 1; min-width: 0; height: 100%; }
.canvas .scroll { width: 17px; background: linear-gradient(90deg, #efeef1 15px, #fff 15px); padding: 7px 2px 0 0; }

.linear { width: 288px; flex: none; border-left: 4px double #cbcacc; border-right: 1px solid #999; background: #fff; display: flex; flex-direction: column; }
.linear .panel-head { background: #efeef1; padding: 2px 2px 0 2px; }
.ltabs { display: grid; grid-template-columns: 52px 53px 51px 55px 50px 1fr; height: 38px; flex: none; background: #efeef1; border-bottom: 1px solid #ccc; padding-top: 1px; }
.ltabs > button { position: relative; display: grid; place-items: center; border: 1px solid #bab9bc; border-left-width: 0; }
.ltabs > .active { background: #fff; border-color: #fff; }
.badge { position: absolute; right: 9px; top: 3px; width: 11px; height: 13px; border-radius: 6px; background: #dc1440; color: #fff; line-height: 13px; text-align: center; }
.lside { display: flex; flex-direction: column; align-items: flex-end; gap: 4px; }
.lbody { flex: 1; background: linear-gradient(#b3d3e6, #eaf4f9 70px, #fff 130px); padding: 0 5px 0 7px; display: flex; flex-direction: column; gap: 4px; }
.lhead { display: flex; align-items: center; gap: 2px; height: 44px; padding-left: 7px; color: #fff; font-size: 15px; }
.lbody button { height: 20px; flex: none; border: 1px solid #2c2b2e; background: #f1f0f3; text-align: left; padding-left: 23px; font-weight: 700; line-height: 18px; color: #2c2b2e; }
.lbody .split { display: flex; align-items: stretch; justify-content: space-between; padding: 0 5px 0 23px; }
.lbody .split .chev { margin-top: 6px; }
.lbody .split .chev.up { margin-top: 8px; }
.fold { height: 131px; border: 1px solid #2c2b2e; display: flex; flex-direction: column; gap: 6px; background: #fff; padding-right: 6px; }
.fold .split { margin: -1px -7px 0 -1px; }
.fold .sub { font-weight: 400; padding-left: 11px; }

/* dialog */
.dialog { position: absolute; left: 944px; top: 67px; width: 598px; height: 395px; border: 1px solid #a5a4a7; background: #f0eff2; box-shadow: 0 2px 10px rgba(0, 0, 0, .3); font: 10px/12px "Liberation Sans", sans-serif; color: #222; display: flex; flex-direction: column; }
.dhead { height: 28px; flex: none; background: #fff; display: flex; align-items: center; padding: 0 14px 0 7px; gap: 5px; color: #8d8c90; font: 11px/16px Roboto, sans-serif; }
.dhead span { flex: 1; }
.dhead button { width: 14px; margin-left: 23px; display: grid; place-items: center; }
.dbody { flex: 1; display: flex; gap: 5px; padding: 13px 0 0 10px; }
.dleft { width: 477px; }
.dtabs { display: flex; align-items: flex-end; height: 17px; padding-left: 2px; }
.dtabs button { height: 16px; width: 95px; border: 1px solid #d8d7da; border-bottom: 0; }
.dtabs .active { height: 17px; width: 92px; background: #fff; }
.dgrid { height: 325px; border: 2px solid #b3b2b5; display: flex; overflow: hidden; }
.dgrid table { width: 458px; flex: none; table-layout: fixed; border-collapse: separate; border-spacing: 0; }
.n { width: 22px; }
.p { width: 219px; }
.v { width: 217px; }
.dgrid td, .dgrid th { padding: 0; font-weight: 400; text-align: left; vertical-align: top; border-right: 1px solid #a3a2a5; }
.dgrid thead th { height: 19px; line-height: 18px; padding-left: 2px; border-bottom: 1px solid #a3a2a5; }
.dgrid tbody th { text-align: right; padding-right: 6px; }
.dgrid tbody tr { height: 17px; }
.dgrid tbody tr:nth-child(3n) { height: 16px; }
.dgrid td { border-bottom: 1px solid #a3a2a5; }
.dgrid .item { height: 77px; }
.dgrid .item td { background: #fff; padding: 3px 0 1px 1px; }
.dgrid .item th { padding-top: 3px; }
.dgrid .sel td { background: #b5d6f5; border-color: #fff; }
.dgrid .sel th { background: #9d9ca0; }
.dgrid .scroll { flex: 1; margin-top: 18px; padding: 8px 0 7px; border-top: 1px solid #a3a2a5; }
.dgrid .thumbbar { flex: 1; width: 13px; margin: 2px 0 5px; background: #cbcacc; }
.dside { width: 90px; padding-top: 41px; display: flex; flex-direction: column; gap: 4px; }
.dside span { height: 12px; }
.dside .second { margin: 8px 0 0; }
.dside button { height: 20px; background: #cbcacc; color: #8a898c; }
.pair { display: flex; justify-content: space-between; }
.pair button { width: 21px; }
.dside .end { margin-top: 24px; }
.grip { position: absolute; right: 0; bottom: 0; }

/* player */
.player { flex: none; height: 52px; background: #fff; display: flex; align-items: center; padding: 0 13px 0 5px; }
.time { width: 77px; margin-left: 19px; color: #222; font: 10px/14px "Liberation Sans", sans-serif; }
.player input { appearance: none; flex: 1; height: 14px; background: linear-gradient(90deg, #1a3d45 61%, #d9d9d9 61%) no-repeat center / 100% 4px; }
.player input::-webkit-slider-thumb { appearance: none; width: 14px; height: 14px; border-radius: 7px; background: #1a3d45; }
.controls { display: flex; align-items: center; justify-content: space-between; width: 160px; margin-left: 100px; }
```
